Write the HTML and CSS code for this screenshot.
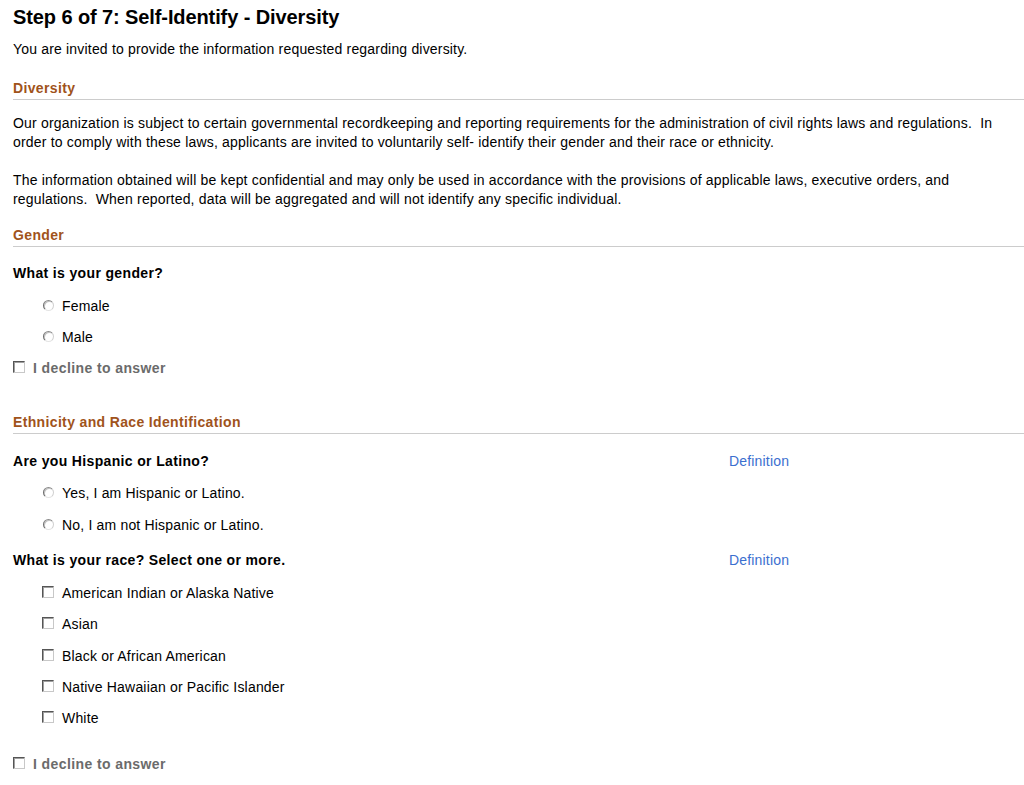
FILE: index.html
```html
<!DOCTYPE html>
<html lang="en">
<head>
<meta charset="utf-8">
<title>Step 6 of 7: Self-Identify - Diversity</title>
<link rel="stylesheet" href="styles.css">
</head>
<body>
<main class="page">
  <h1 class="title">Step 6 of 7: Self-Identify - Diversity</h1>
  <p class="intro">You are invited to provide the information requested regarding diversity.</p>

  <h2 class="section section-first">Diversity</h2>
  <p class="para para-first">Our organization is subject to certain governmental recordkeeping and reporting requirements for the administration of civil rights laws and regulations.&nbsp; In order to comply with these laws, applicants are invited to voluntarily self- identify their gender and their race or ethnicity.</p>
  <p class="para para-next">The information obtained will be kept confidential and may only be used in accordance with the provisions of applicable laws, executive orders, and regulations.&nbsp; When reported, data will be aggregated and will not identify any specific individual.</p>

  <h2 class="section section-gender">Gender</h2>
  <div class="question q-gender"><span class="q-text">What is your gender?</span></div>
  <ul class="options opts-gender">
    <li class="opt"><span class="radio"></span><span>Female</span></li>
    <li class="opt"><span class="radio"></span><span>Male</span></li>
  </ul>
  <div class="decline decline-gender"><span class="check"></span><span>I decline to answer</span></div>

  <h2 class="section section-eth">Ethnicity and Race Identification</h2>
  <div class="question q-hisp"><span class="q-text">Are you Hispanic or Latino?</span><a class="def" href="#">Definition</a></div>
  <ul class="options opts-hisp">
    <li class="opt"><span class="radio"></span><span>Yes, I am Hispanic or Latino.</span></li>
    <li class="opt"><span class="radio"></span><span>No, I am not Hispanic or Latino.</span></li>
  </ul>
  <div class="question q-race"><span class="q-text">What is your race? Select one or more.</span><a class="def" href="#">Definition</a></div>
  <ul class="options opts-race">
    <li class="opt"><span class="check"></span><span>American Indian or Alaska Native</span></li>
    <li class="opt"><span class="check"></span><span>Asian</span></li>
    <li class="opt"><span class="check"></span><span>Black or African American</span></li>
    <li class="opt"><span class="check"></span><span>Native Hawaiian or Pacific Islander</span></li>
    <li class="opt"><span class="check"></span><span>White</span></li>
  </ul>
  <div class="decline decline-race"><span class="check"></span><span>I decline to answer</span></div>
</main>
</body>
</html>
```

FILE: styles.css
```css
html, body {
  margin: 0;
  padding: 0;
  background: #ffffff;
}
body {
  font-family: "Liberation Sans", Arial, sans-serif;
  font-size: 14px;
  line-height: 19px;
  color: #000000;
  letter-spacing: 0.18px;
}
.page {
  padding: 5px 0 20px 13px;
}
.title {
  margin: 0;
  font-size: 20px;
  line-height: 24px;
  font-weight: bold;
  letter-spacing: -0.1px;
}
.intro {
  margin: 11px 0 0 0;
}
.section {
  margin: 0;
  font-size: 14px;
  line-height: 18px;
  font-weight: bold;
  letter-spacing: 0.35px;
  color: #a0531b;
  padding-bottom: 2px;
  border-bottom: 1px solid #cccccc;
}
.section-first { margin-top: 20px; }
.section-gender { margin-top: 17px; }
.section-eth { margin-top: 35px; }
.para {
  margin: 0;
  padding-right: 12px;
}
.para-first { margin-top: 14px; }
.para-next { margin-top: 19px; }
.question {
  display: grid;
  grid-template-columns: 716px auto;
  font-weight: bold;
  letter-spacing: 0.35px;
}
.q-gender { margin-top: 17px; }
.q-hisp { margin-top: 18px; }
.q-race { margin-top: 16px; }
.def {
  font-weight: normal;
  letter-spacing: 0.18px;
  color: #3b6fcf;
  text-decoration: none;
}
.options {
  list-style: none;
  margin: 0;
  padding: 0 0 0 29px;
  display: flex;
  flex-direction: column;
}
.opts-gender { margin-top: 14px; gap: 12px; }
.opts-hisp { margin-top: 13px; gap: 13px; }
.opts-race { margin-top: 14px; gap: 12.25px; }
.opt {
  display: flex;
  align-items: center;
  gap: 8px;
}
.radio {
  box-sizing: border-box;
  width: 11px;
  height: 11px;
  margin-top: -3px;
  margin-left: 1px;
  border-radius: 50%;
  border: 1px solid;
  border-color: #8a8a8a #d0d0d0 #e4e4e4 #6e6e6e;
  box-shadow: inset 1px 1px 0 #c4c4c4;
  background: #ffffff;
  flex: none;
}
.check {
  box-sizing: border-box;
  width: 12px;
  height: 12px;
  margin-top: -3px;
  border: 1px solid;
  border-color: #555555 #c8c8c8 #c8c8c8 #555555;
  box-shadow: inset 1px 1px 0 #a0a0a0;
  background: #ffffff;
  flex: none;
}
.decline {
  display: flex;
  align-items: center;
  gap: 8px;
  font-weight: bold;
  letter-spacing: 0.4px;
  color: #6b6b6b;
}
.decline-gender { margin-top: 12px; }
.decline-race { margin-top: 27px; }
```
